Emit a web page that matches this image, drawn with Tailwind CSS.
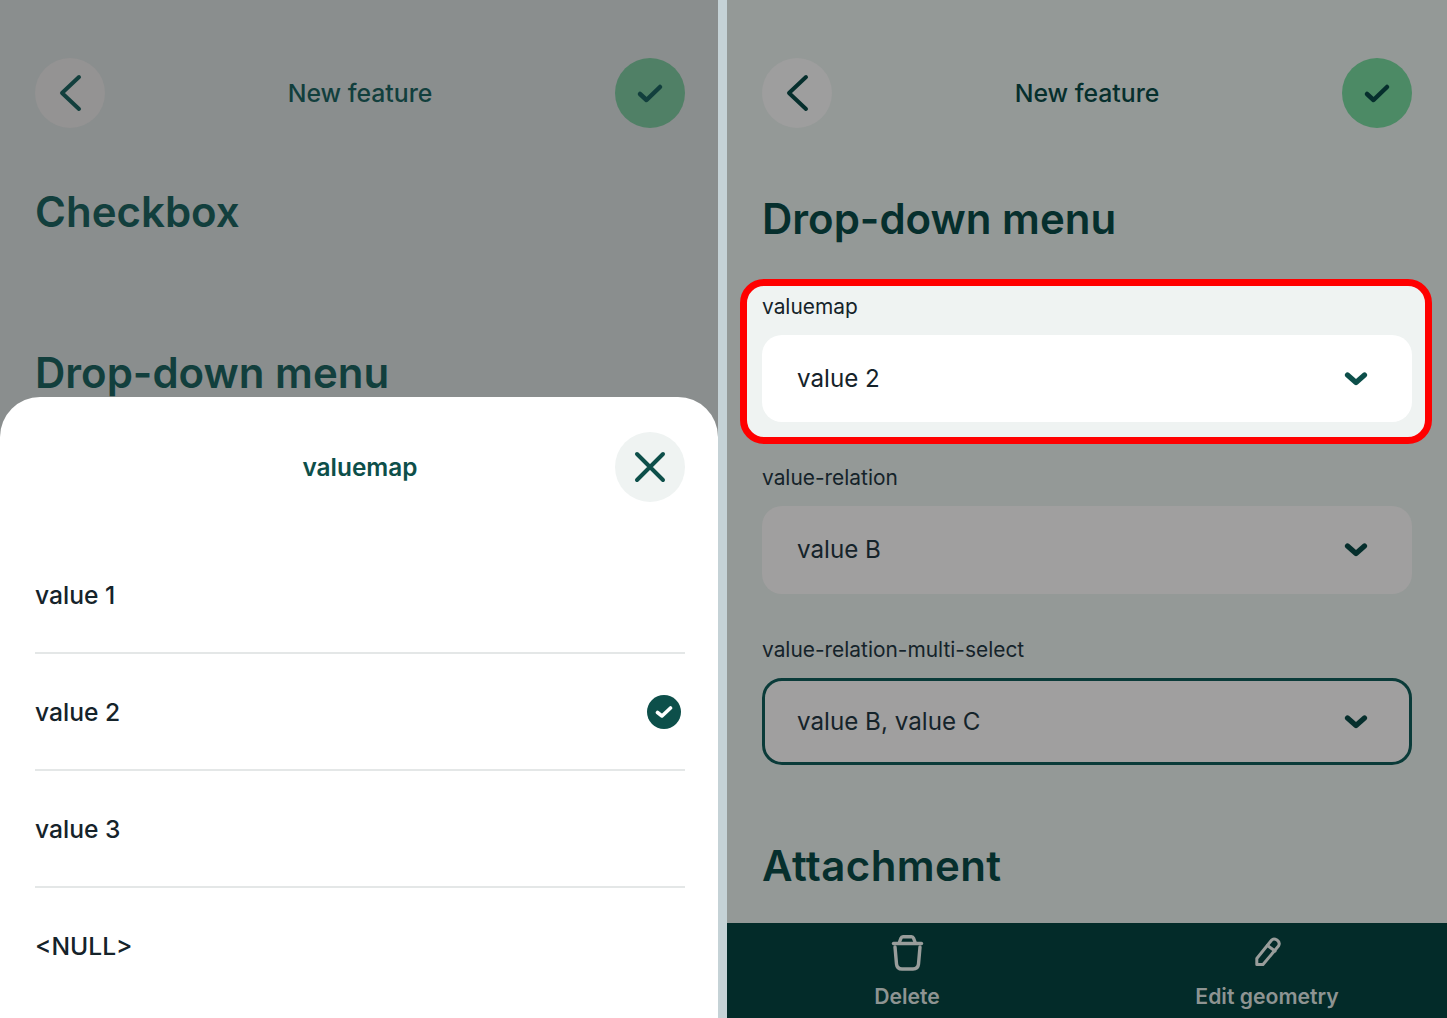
<!DOCTYPE html>
<html>
<head>
<meta charset="utf-8">
<script src="https://cdn.jsdelivr.net/npm/@tailwindcss/browser@4"></script>
</head>
<body class="m-0 overflow-hidden font-['Inter',sans-serif]">
<div class="flex w-[1447px] h-[1018px] bg-[#c5d2d6]">
  <!-- LEFT -->
  <div class="relative w-[718px] h-[1018px] bg-[#8a8e8e] overflow-hidden">
    <div class="flex items-center justify-between pl-[35px] pr-[33px] pt-[58px]">
      <div class="w-[70px] h-[70px] rounded-full bg-[#949393] flex items-center justify-center">
        <svg width="40" height="40" viewBox="0 0 40 40" fill="none" stroke="#123f3d" stroke-width="4" stroke-linecap="round" stroke-linejoin="round"><path d="M29 4 L12 20 L29 36"/></svg>
      </div>
      <div class="text-[24.8px] leading-[32px] font-medium text-[#123f3d]">New feature</div>
      <div class="w-[70px] h-[70px] rounded-full bg-[#508066] flex items-center justify-center">
        <svg width="28" height="22" viewBox="0 0 28 22" fill="none" stroke="#123f3d" stroke-width="4.5" stroke-linecap="round" stroke-linejoin="round"><path d="M4 12 L10.5 18 L24 5"/></svg>
      </div>
    </div>
    <div class="pl-[35px] pt-[56px] text-[42px] leading-[56px] font-semibold text-[#123f3d]">Checkbox</div>
    <div class="pl-[35px] pt-[105px] text-[42px] leading-[56px] font-semibold text-[#123f3d]">Drop-down menu</div>
    <!-- sheet -->
    <div class="absolute left-0 top-[397px] w-[718px] h-[621px] bg-white rounded-t-[40px]">
      <div class="relative h-[140px]">
        <div class="absolute left-0 w-[720px] top-[52px] text-center text-[24.4px] font-semibold text-[#0d4f4a]">valuemap</div>
        <div class="absolute left-[615px] top-[35px] w-[70px] h-[70px] rounded-full bg-[#eff3f2] flex items-center justify-center">
          <svg width="32" height="32" viewBox="0 0 32 32" fill="none" stroke="#0d4f4a" stroke-width="4" stroke-linecap="round"><path d="M3 3 L29 29 M29 3 L3 29"/></svg>
        </div>
      </div>
      <div class="ml-[35px] w-[650px]">
        <div class="h-[117px] flex items-center justify-between border-b-2 border-[#e4e7e7] text-[24.6px] font-medium text-[#15232a] pt-[1px]">value 1</div>
        <div class="h-[117px] flex items-center justify-between border-b-2 border-[#e4e7e7] text-[24.6px] font-medium text-[#15232a] pt-[1px]">
          <span>value 2</span>
          <div class="w-[34px] h-[34px] rounded-full bg-[#0d4f4a] flex items-center justify-center mr-[4px]">
            <svg width="18" height="14" viewBox="0 0 18 14" fill="none" stroke="#fff" stroke-width="3.6" stroke-linecap="round" stroke-linejoin="round"><path d="M2.5 7.5 L7 11 L15.5 3"/></svg>
          </div>
        </div>
        <div class="h-[117px] flex items-center justify-between border-b-2 border-[#e4e7e7] text-[24.6px] font-medium text-[#15232a] pt-[1px]">value 3</div>
        <div class="h-[117px] flex items-center justify-between text-[24.6px] font-medium text-[#15232a] pb-[1px]">&lt;NULL&gt;</div>
      </div>
    </div>
  </div>
  <div class="w-[9px]"></div>
  <!-- RIGHT -->
  <div class="relative w-[720px] h-[1018px] bg-[#949997] overflow-hidden flex flex-col">
    <div class="flex items-center justify-between pl-[35px] pr-[35px] pt-[58px]">
      <div class="w-[70px] h-[70px] rounded-full bg-[#9e9e9e] flex items-center justify-center">
        <svg width="40" height="40" viewBox="0 0 40 40" fill="none" stroke="#062f2d" stroke-width="4" stroke-linecap="round" stroke-linejoin="round"><path d="M29 4 L12 20 L29 36"/></svg>
      </div>
      <div class="text-[24.8px] leading-[32px] font-medium text-[#062f2d]">New feature</div>
      <div class="w-[70px] h-[70px] rounded-full bg-[#4c8a65] flex items-center justify-center">
        <svg width="28" height="22" viewBox="0 0 28 22" fill="none" stroke="#062f2d" stroke-width="4.5" stroke-linecap="round" stroke-linejoin="round"><path d="M4 12 L10.5 18 L24 5"/></svg>
      </div>
    </div>
    <div class="pl-[35px] pt-[63px] text-[42px] leading-[56px] font-semibold text-[#062f2d]">Drop-down menu</div>
    <!-- highlighted -->
    <div class="ml-[13px] mt-[32px] w-[692px] h-[165px] border-[7px] border-[#ff0000] rounded-[24px] bg-[#eff3f2] pl-[15px] pr-[13px]">
      <div class="text-[20.9px] leading-[26px] pt-[8px] text-[#15232a] h-[49px]">valuemap</div>
      <div class="h-[87px] rounded-[20px] bg-white flex items-center justify-between pl-[35px] pr-[44px] text-[24.2px] text-[#15232a]">
        <span class="pt-[1px]">value 2</span>
        <svg width="24" height="16" viewBox="0 0 24 16" fill="none" stroke="#0d4f4a" stroke-width="5.2" stroke-linecap="round" stroke-linejoin="round"><path d="M3.5 4 L12 11.5 L20.5 4"/></svg>
      </div>
    </div>
    <div class="ml-[35px] w-[650px]">
      <div class="text-[20.9px] leading-[26px] pt-[21px] h-[62px] text-[#15232a]">value-relation</div>
      <div class="h-[88px] rounded-[20px] bg-[#a09f9f] flex items-center justify-between pl-[35px] pr-[44px] text-[24.2px] text-[#15232a]">
        <span class="pt-[1px]">value B</span>
        <svg width="24" height="16" viewBox="0 0 24 16" fill="none" stroke="#062f2d" stroke-width="5.2" stroke-linecap="round" stroke-linejoin="round"><path d="M3.5 4 L12 11.5 L20.5 4"/></svg>
      </div>
      <div class="text-[20.9px] leading-[26px] pt-[43px] h-[84px] text-[#15232a]">value-relation-multi-select</div>
      <div class="h-[87px] rounded-[20px] border-[3px] border-[#0a3b39] bg-[#a09f9f] flex items-center justify-between pl-[32px] pr-[41px] text-[24.2px] text-[#15232a]">
        <span class="pt-[1px]">value B, value C</span>
        <svg width="24" height="16" viewBox="0 0 24 16" fill="none" stroke="#062f2d" stroke-width="5.2" stroke-linecap="round" stroke-linejoin="round"><path d="M3.5 4 L12 11.5 L20.5 4"/></svg>
      </div>
    </div>
    <div class="pl-[35px] pt-[73px] text-[42px] leading-[56px] font-semibold tracking-[0.4px] text-[#062f2d]">Attachment</div>
    <!-- bottom bar -->
    <div class="absolute left-0 bottom-0 w-[720px] h-[95px] bg-[#032b29] flex">
      <div class="w-[360px] flex flex-col items-center">
        <svg class="mt-[12px]" width="34" height="38" viewBox="0 0 34 38" fill="none" stroke="#999d9b" stroke-width="3.4" stroke-linecap="round" stroke-linejoin="round"><path d="M3.5 8.5 H31.5"/><path d="M9.5 7 L11 3.2 Q11.5 1.7 13 1.7 H21.5 Q23 1.7 23.5 3.2 L25 7"/><path d="M5 12 L6.5 29 Q7 34 12 34 H23 Q28 34 28.5 29 L30 12"/></svg>
        <div class="mt-[10px] text-[21.2px] leading-[26px] font-semibold text-[#8e9492]">Delete</div>
      </div>
      <div class="w-[360px] flex flex-col items-center">
        <svg class="mt-[14px]" width="30" height="32" viewBox="0 0 30 32" fill="none" stroke="#999d9b" stroke-width="3" stroke-linecap="round" stroke-linejoin="round"><path d="M19.5 3.2 L4.8 21.5 V27.5 H11 L26.5 9 Q28.5 5.5 25 3 Q21.5 1 19.5 3.2 Z"/><path d="M15.5 8.5 L23 14"/></svg>
        <div class="mt-[14px] text-[21.2px] leading-[26px] font-semibold text-[#8e9492]">Edit geometry</div>
      </div>
    </div>
  </div>
</div>
</body>
</html>
